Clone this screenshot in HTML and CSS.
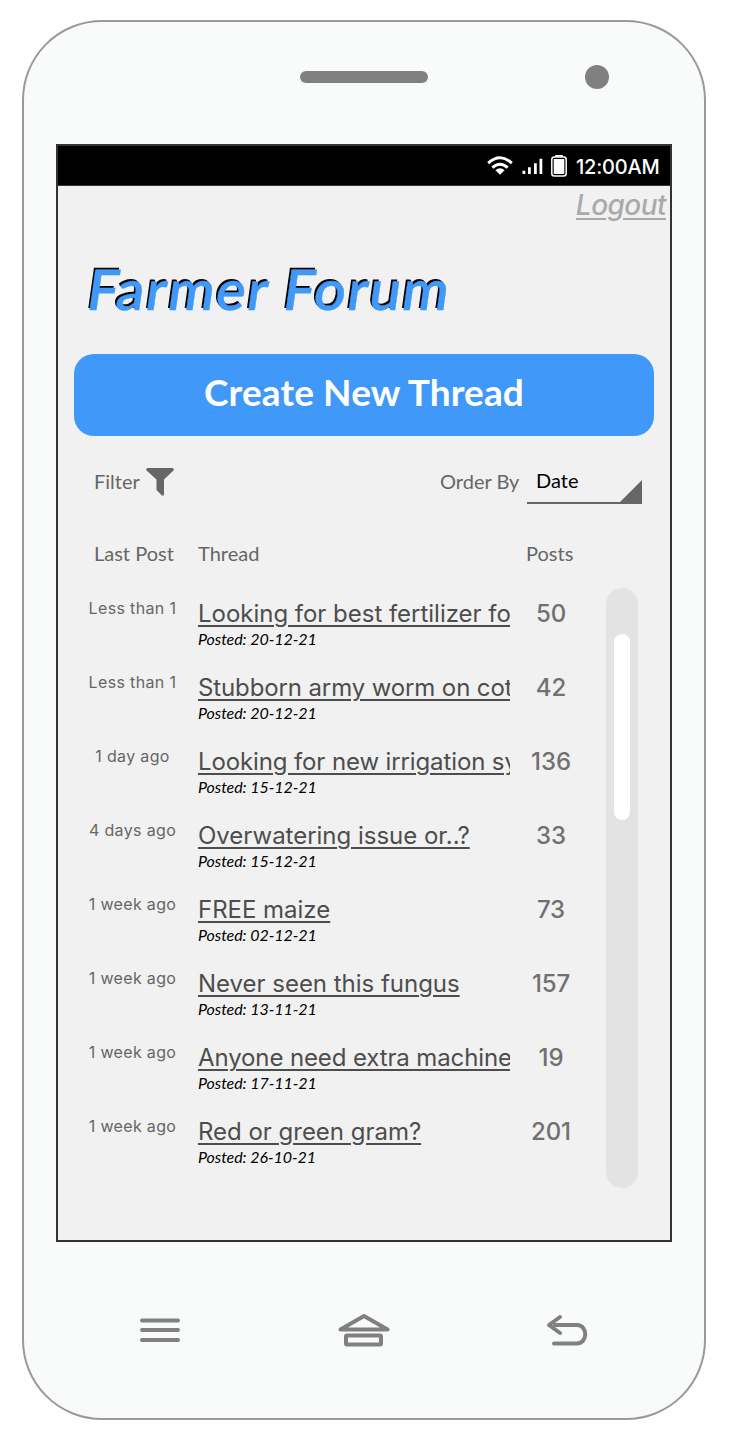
FILE: index.html
```html
<!DOCTYPE html>
<html lang="en">
<head>
<meta charset="utf-8">
<title>Farmer Forum</title>
<link rel="stylesheet" href="styles.css">
</head>
<body>
<div class="phone">
  <div class="phone-top"><span class="speaker"></span><span class="camera"></span></div>
  <main class="screen">
    <div class="status">
      <svg class="wifi" width="26" height="20" viewBox="0 0 26 20"><g fill="none" stroke="#fff" stroke-width="3"><path d="M1.2 7.200Q13-3.600 24.800 7.200"/><path d="M5.300 11.700Q13 4.800 20.700 11.700"/></g><path d="M8.400 14.200Q13 10.400 17.600 14.200L13 18.800Z" fill="#fff"/></svg>
      <svg class="signal" width="21" height="17" viewBox="0 0 21 17" fill="#fff"><path d="M.5 12.800h2.800v3.200H.5zM6 9.200h2.800V16H6zM12 5.200h2.800V16H12zM17.500.8h2.800V16h-2.800z"/></svg>
      <svg class="battery" width="16" height="22" viewBox="0 0 16 22"><path d="M5 2V.8h6V2" fill="none" stroke="#fff" stroke-width="1.500"/><rect x=".8" y="2" width="14.400" height="19" rx="2.500" fill="none" stroke="#fff" stroke-width="1.500"/><path d="M2.700 4h10.600v15H2.700z" fill="#fff"/></svg>
      <span class="clock">12:00AM</span>
    </div>
    <a class="logout">Logout</a>
    <h1 class="title">Farmer Forum</h1>
    <button class="create">Create New Thread</button>
    <div class="controls">
      <span class="filter">Filter</span>
      <svg class="funnel" width="28" height="28" viewBox="0 0 28 28"><path d="M1 0H27L28 2L18 11.500V26.500Q18 28 16 27.500L10.500 22V11.500L0 2Z" fill="#666"/></svg>
      <span class="order">Order By</span>
      <div class="select"><span class="select-value">Date</span><svg class="select-corner" width="22" height="22" viewBox="0 0 22 22"><path d="M0 22L22 0V22Z" fill="#666"/></svg></div>
    </div>
    <div class="headings"><span class="h-last">Last Post</span><span class="h-thread">Thread</span><span class="h-posts">Posts</span></div>
    <div class="list">
      <div class="rows">
        <div class="row"><span class="time">Less than 1</span><div class="thread"><a class="link">Looking for best fertilizer fo</a><span class="posted">Posted: 20-12-21</span></div><span class="count">50</span></div>
        <div class="row"><span class="time">Less than 1</span><div class="thread"><a class="link tight">Stubborn army worm on cot</a><span class="posted">Posted: 20-12-21</span></div><span class="count">42</span></div>
        <div class="row"><span class="time">1 day ago</span><div class="thread"><a class="link tight">Looking for new irrigation sy</a><span class="posted">Posted: 15-12-21</span></div><span class="count">136</span></div>
        <div class="row"><span class="time">4 days ago</span><div class="thread"><a class="link">Overwatering issue or..?</a><span class="posted">Posted: 15-12-21</span></div><span class="count">33</span></div>
        <div class="row"><span class="time">1 week ago</span><div class="thread"><a class="link">FREE maize</a><span class="posted">Posted: 02-12-21</span></div><span class="count">73</span></div>
        <div class="row"><span class="time">1 week ago</span><div class="thread"><a class="link">Never seen this fungus</a><span class="posted">Posted: 13-11-21</span></div><span class="count">157</span></div>
        <div class="row"><span class="time">1 week ago</span><div class="thread"><a class="link tight">Anyone need extra machine</a><span class="posted">Posted: 17-11-21</span></div><span class="count">19</span></div>
        <div class="row"><span class="time">1 week ago</span><div class="thread"><a class="link">Red or green gram?</a><span class="posted">Posted: 26-10-21</span></div><span class="count">201</span></div>
      </div>
      <div class="track"><div class="thumb"></div></div>
    </div>
  </main>
  <nav class="nav">
    <svg width="42" height="36" viewBox="0 0 42 36" fill="none" stroke="#808080" stroke-width="4" stroke-linecap="round"><path d="M3 7.500H39M3 17H39M3 27H39"/></svg>
    <svg width="52" height="36" viewBox="0 0 52 36" fill="none" stroke="#808080" stroke-width="4" stroke-linejoin="round"><path d="M2.500 16.500L26 3L49.500 16.500Z"/><rect x="8" y="22.500" width="35" height="9" rx="1"/></svg>
    <svg width="42" height="36" viewBox="0 0 42 36" fill="none" stroke="#808080" stroke-width="4" stroke-linecap="round" stroke-linejoin="round"><path d="M14 4L3 12L14 20M9 12H31C42 12 42 30.500 31 30.500H8"/></svg>
  </nav>
</div>
</body>
</html>
```
FILE: styles.css
```css
* { box-sizing: border-box; }
body { margin: 0; background: #fff; padding: 20px 22px; height: 1444px; }
.phone { width: 684px; height: 1400px; border: 2px solid #999; border-radius: 80px; background: #f9fafa; display: flex; flex-direction: column; }
.phone-top { height: 122px; padding: 43px 0 0 276px; display: flex; align-items: flex-start; }
.speaker { width: 128px; height: 12px; margin-top: 6px; border-radius: 6px; background: #808080; }
.camera { width: 24px; height: 24px; margin-left: 156.5px; border-radius: 50%; background: #808080; }
.screen { width: 616px; height: 1098px; margin-left: 32px; border: 2px solid #333; background: #f1f1f1; color: #666; font-family: Lato, "Liberation Sans", sans-serif; display: flex; flex-direction: column; flex-shrink: 0; }
.status { height: 40px; background: #000; border-bottom: 1px solid #333; color: #fff; display: flex; align-items: center; padding-left: 429px; white-space: nowrap; }
.wifi { margin-top: 1px; }
.signal { margin: 2px 0 0 9px; }
.battery { margin: 0 0 0 8px; }
.clock { margin: 2px 0 0 9px; font: 500 20px/30px Inter, sans-serif; letter-spacing: -.2px; }
.logout { align-self: flex-end; margin: -1px 4px 0 0; height: 41px; font: italic 500 28px/40px Inter, sans-serif; color: #aaa; text-decoration: underline; text-decoration-thickness: 2px; text-underline-offset: 3px; letter-spacing: -.55px; }
.title { align-self: flex-start; margin: 28px 0 0 30px; height: 71px; font-size: 56px; line-height: 70px; font-weight: 600; color: #4098f8; text-shadow: -2px -2px 0 #000; -webkit-text-stroke: .4px #4098f8; letter-spacing: 1.400px; white-space: nowrap; transform: skewX(-8deg); }
.create { margin: 29px 16px 0; height: 82px; border: 0; border-radius: 20px; background: #4098f8; color: #fff; padding: 0 0 6px; font: 700 37px/44px Lato, sans-serif; letter-spacing: .1px; }
.controls { display: flex; height: 40px; margin: 28px 28px 0 36px; font-size: 20px; line-height: 34px; white-space: nowrap; }
.filter { width: 52px; }
.funnel { margin-top: 4px; }
.order { margin-left: auto; width: 87px; }
.select { width: 115px; height: 40px; border-bottom: 2px solid #666; display: flex; justify-content: space-between; align-items: flex-end; }
.select-value { align-self: flex-start; padding-left: 9px; color: #000; line-height: 32px; }
.headings { display: grid; grid-template-columns: 104px 328px 1fr; margin: 35px 0 0 36px; height: 29px; font-size: 20px; line-height: 28px; }
.list { display: flex; margin-top: 20px; height: 600px; }
.rows { width: 548px; padding-left: 20px; }
.row { height: 74px; padding-top: 8px; display: grid; grid-template-columns: 108px 12px 312px 82px; white-space: nowrap; }
.time { grid-column: 1; text-align: center; padding: 2px 0 0 1px; font: 400 16px/20px Inter, sans-serif; letter-spacing: .35px; }
.thread { grid-column: 3; overflow: hidden; }
.link { display: block; font: 400 24px/36px Inter, sans-serif; letter-spacing: -.02px; color: #4d4d4d; text-decoration: underline; text-decoration-thickness: 2px; text-underline-offset: 3px; }
.link.tight { letter-spacing: -.12px; }
.posted { display: block; color: #000; font-size: 16px; line-height: 18px; font-style: italic; margin-top: -2px; letter-spacing: -.05px; }
.count { text-align: center; font: 500 24px/36px Inter, sans-serif; color: #707070; letter-spacing: -.1px; }
.track { width: 32px; border-radius: 16px; background: #e3e3e3; padding: 46px 8px 0; }
.thumb { height: 186px; border-radius: 8px; background: #fff; }
.nav { display: flex; justify-content: space-between; padding: 71px 116px 0 115px; }
```
